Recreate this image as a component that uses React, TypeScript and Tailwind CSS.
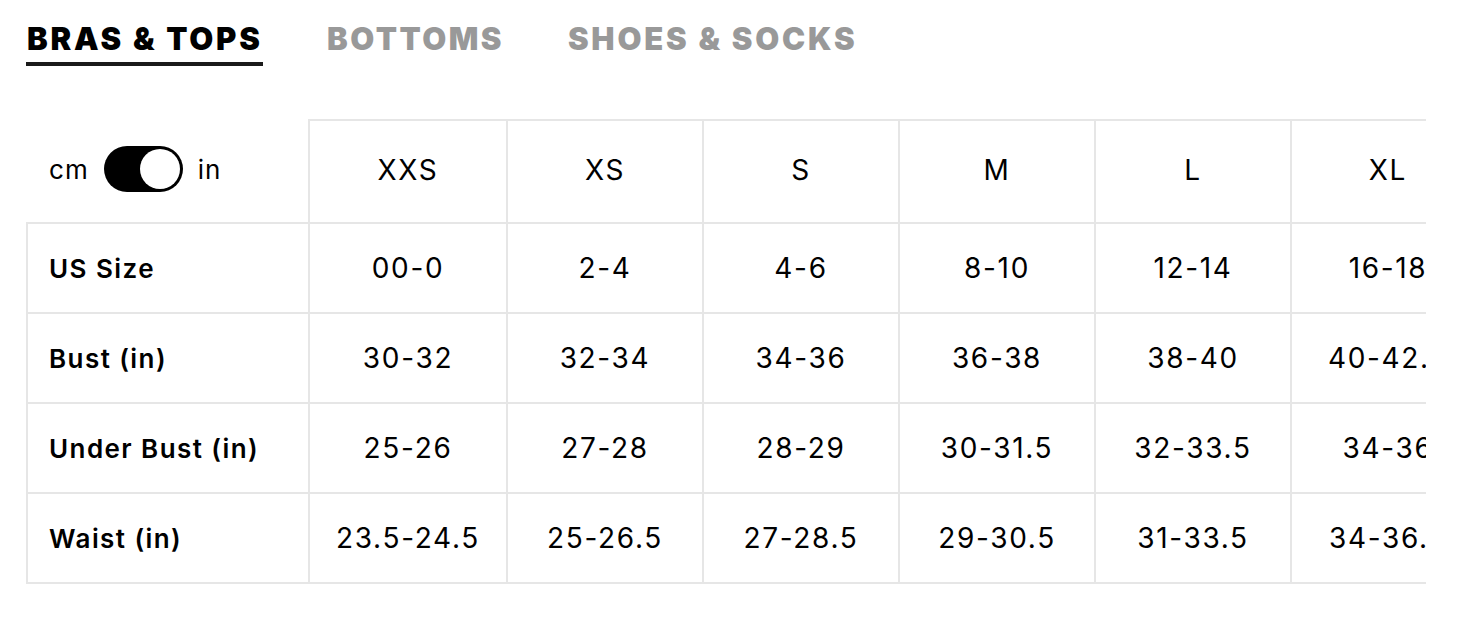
import React from "react";

const sizes = ["XXS", "XS", "S", "M", "L", "XL"];

const rows: { label: string; values: string[] }[] = [
  { label: "US Size", values: ["00-0", "2-4", "4-6", "8-10", "12-14", "16-18"] },
  { label: "Bust (in)", values: ["30-32", "32-34", "34-36", "36-38", "38-40", "40-42.5"] },
  { label: "Under Bust (in)", values: ["25-26", "27-28", "28-29", "30-31.5", "32-33.5", "34-36"] },
  { label: "Waist (in)", values: ["23.5-24.5", "25-26.5", "27-28.5", "29-30.5", "31-33.5", "34-36.5"] },
];

const Toggle = () => (
  <div className="w-[79px] h-[46px] rounded-full bg-black p-[3px] flex justify-end">
    <div className="w-[40px] h-[40px] rounded-full bg-white" />
  </div>
);

export default function App() {
  return (
    <div className="w-[1466px] h-[640px] bg-white text-black font-['Inter','Liberation_Sans',sans-serif]">
      <div className="flex items-start gap-[64px] pl-[27px] pt-[22px]">
        <div className="flex flex-col">
          <span className="text-[31px] leading-[34px] font-black tracking-[0.09em]">BRAS &amp; TOPS</span>
          <div className="mt-[6px] h-[4px] w-[237px] -ml-[1px] bg-[#1a1a1a]" />
        </div>
        <span className="text-[31px] leading-[34px] font-black tracking-[0.08em] text-[#999999]">BOTTOMS</span>
        <span className="text-[31px] leading-[34px] font-black tracking-[0.09em] text-[#999999]">SHOES &amp; SOCKS</span>
      </div>

      <div className="ml-[26px] mt-[53px] w-[1400px] overflow-hidden">
        <table className="border-collapse table-fixed w-[1458px]">
          <colgroup>
            <col className="w-[282px]" />
            <col className="w-[198px]" />
            <col className="w-[196px]" />
            <col className="w-[196px]" />
            <col className="w-[196px]" />
            <col className="w-[196px]" />
            <col className="w-[194px]" />
          </colgroup>
          <thead>
            <tr className="h-[103px]">
              <th className="border-2 border-[#e6e6e6] border-t-0 border-l-0 px-[22px] text-left font-normal">
                <div className="flex items-center gap-[15px] text-[26px] tracking-[0.04em] -mt-[4px]">
                  <span>cm</span>
                  <Toggle />
                  <span>in</span>
                </div>
              </th>
              {sizes.map((s) => (
                <th key={s} className="border-2 border-[#e6e6e6] text-center text-[28px] tracking-[0.06em] font-normal">
                  <span className="relative -top-[2px]">{s}</span>
                </th>
              ))}
            </tr>
          </thead>
          <tbody>
            {rows.map((r) => (
              <tr key={r.label} className="h-[90px]">
                <td className="border-2 border-[#e6e6e6] px-[21px] text-left text-[26px] tracking-[0.055em] font-semibold">
                  {r.label}
                </td>
                {r.values.map((v, i) => (
                  <td
                    key={i}
                    className="border-2 border-[#e6e6e6] text-center text-[28px] tracking-[0.06em] whitespace-nowrap"
                  >
                    {v}
                  </td>
                ))}
              </tr>
            ))}
          </tbody>
        </table>
      </div>
    </div>
  );
}
